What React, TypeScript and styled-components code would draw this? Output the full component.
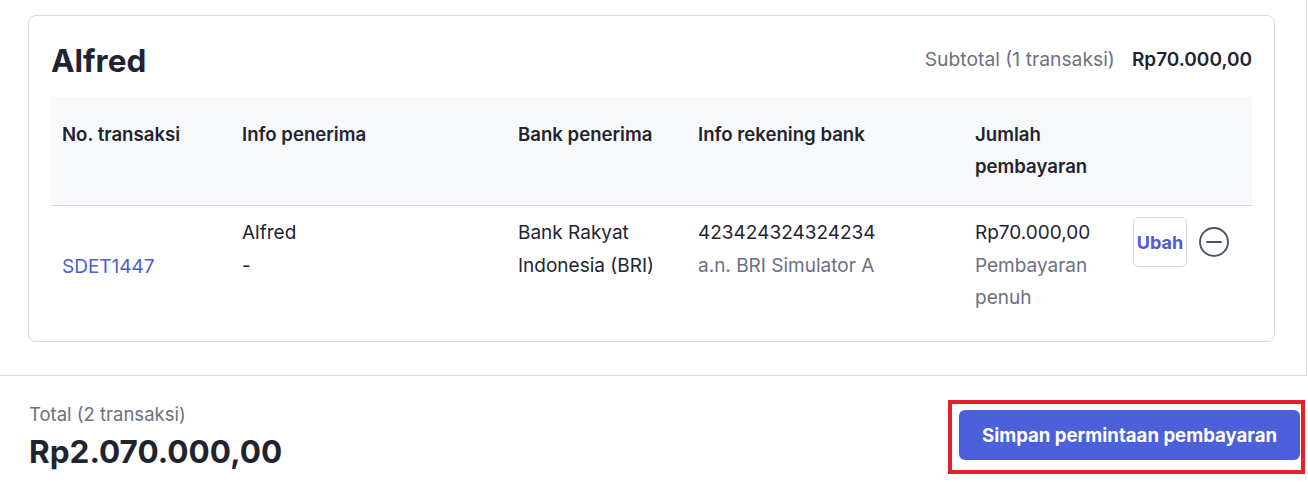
import styled, { createGlobalStyle } from 'styled-components';

const COLORS = {
  text: '#1f2430',
  muted: '#6b7280',
  border: '#d6d9df',
  headBg: '#f8f9fb',
  link: '#4f5bd5',
  primary: '#4c60dc',
  highlight: '#e3202b',
};

type Transaction = {
  id: string;
  recipient: string;
  recipientNote: string;
  bank: string[];
  account: string;
  accountName: string;
  amount: string;
  amountNote: string[];
};

const transactions: Transaction[] = [
  {
    id: 'SDET1447',
    recipient: 'Alfred',
    recipientNote: '-',
    bank: ['Bank Rakyat', 'Indonesia (BRI)'],
    account: '423424324324234',
    accountName: 'a.n. BRI Simulator A',
    amount: 'Rp70.000,00',
    amountNote: ['Pembayaran', 'penuh'],
  },
];

const GlobalStyle = createGlobalStyle`
  html, body {
    margin: 0;
    padding: 0;
    background: #ffffff;
  }

  body {
    font-family: Inter, "Noto Sans", "Liberation Sans", sans-serif;
    color: ${COLORS.text};
  }

  * {
    box-sizing: border-box;
  }
`;

export default function App() {
  return (
    <>
      <GlobalStyle />
      <Page>
        <Content>
          <Card>
            <CardHeader>
              <Title>Alfred</Title>
              <Subtotal>
                <SubtotalLabel>Subtotal (1 transaksi)</SubtotalLabel>
                <SubtotalValue>Rp70.000,00</SubtotalValue>
              </Subtotal>
            </CardHeader>
            <Table>
              <HeadCell>No. transaksi</HeadCell>
              <HeadCell>Info penerima</HeadCell>
              <HeadCell>Bank penerima</HeadCell>
              <HeadCell>Info rekening bank</HeadCell>
              <HeadCell>
                Jumlah
                <br />
                pembayaran
              </HeadCell>
              <HeadCell />
              {transactions.map((t) => (
                <Row key={t.id}>
                  <Cell $middle>
                    <TxLink href="#">{t.id}</TxLink>
                  </Cell>
                  <Cell>
                    <div>{t.recipient}</div>
                    <div>{t.recipientNote}</div>
                  </Cell>
                  <Cell>
                    {t.bank.map((line) => (
                      <div key={line}>{line}</div>
                    ))}
                  </Cell>
                  <Cell>
                    <div>{t.account}</div>
                    <Muted>{t.accountName}</Muted>
                  </Cell>
                  <Cell>
                    <div>{t.amount}</div>
                    {t.amountNote.map((line) => (
                      <Muted key={line}>{line}</Muted>
                    ))}
                  </Cell>
                  <ActionCell>
                    <EditButton>Ubah</EditButton>
                    <RemoveButton aria-label="Hapus">
                      <svg width="32" height="32" viewBox="0 0 32 32" fill="none">
                        <circle cx="16" cy="16" r="14" stroke="currentColor" strokeWidth="1.9" />
                        <path d="M9 16h14" stroke="currentColor" strokeWidth="1.9" strokeLinecap="round" />
                      </svg>
                    </RemoveButton>
                  </ActionCell>
                </Row>
              ))}
            </Table>
          </Card>
        </Content>
        <Footer>
          <Total>
            <TotalLabel>Total (2 transaksi)</TotalLabel>
            <TotalValue>Rp2.070.000,00</TotalValue>
          </Total>
          <Highlight>
            <PrimaryButton>Simpan permintaan pembayaran</PrimaryButton>
          </Highlight>
        </Footer>
      </Page>
    </>
  );
}

const Page = styled.div`
  width: 1307px;
  display: flex;
  flex-direction: column;
`;

const Content = styled.div`
  padding: 15px 31px 33px 28px;
  border-right: 1px solid #e4e6ea;
`;

const Card = styled.section`
  border: 1px solid ${COLORS.border};
  border-radius: 8px;
  padding: 24px 22px 0 22px;
  height: 327px;
`;

const CardHeader = styled.div`
  display: flex;
  justify-content: space-between;
  align-items: center;
  height: 42px;
  margin-bottom: 15px;
`;

const Title = styled.h2`
  margin: 0;
  font-size: 31.5px;
  font-weight: 700;
  line-height: 40px;
`;

const Subtotal = styled.div`
  display: flex;
  align-items: center;
  gap: 17px;
  font-size: 19px;
  margin-top: -4px;
`;

const SubtotalLabel = styled.span`
  color: ${COLORS.muted};
  font-size: 19.3px;
`;

const SubtotalValue = styled.span`
  font-weight: 600;
`;

const Table = styled.div`
  display: grid;
  grid-template-columns: 180px 276px 180px 277px 158px 1fr;
  font-size: 19px;
  line-height: 32.5px;
`;

const HeadCell = styled.div`
  background: ${COLORS.headBg};
  padding: 21px 11px 23px;
  font-size: 18.6px;
  line-height: 32px;
  font-weight: 600;
  border-bottom: 1px solid ${COLORS.border};
`;

const Row = styled.div`
  display: contents;
`;

const Cell = styled.div<{ $middle?: boolean }>`
  padding: 11px 11px 0;
  display: flex;
  flex-direction: column;
  justify-content: ${(p) => (p.$middle ? 'center' : 'flex-start')};
`;

const Muted = styled.div`
  color: ${COLORS.muted};
`;

const TxLink = styled.a`
  color: ${COLORS.link};
  text-decoration: none;
  margin-top: 2px;
`;

const ActionCell = styled.div`
  padding: 11px 11px 0;
  display: flex;
  align-items: flex-start;
  gap: 11px;
`;

const EditButton = styled.button`
  width: 54px;
  height: 50px;
  padding: 0;
  background: #ffffff;
  border: 1px solid ${COLORS.border};
  border-radius: 6px;
  font-family: inherit;
  font-size: 18px;
  font-weight: 700;
  color: ${COLORS.link};
`;

const RemoveButton = styled.button`
  width: 32px;
  height: 50px;
  padding: 0;
  border: none;
  background: none;
  color: #4b5563;
  display: flex;
  align-items: center;
  justify-content: center;
`;

const Footer = styled.footer`
  border-top: 1px solid ${COLORS.border};
  display: flex;
  justify-content: space-between;
  align-items: flex-start;
  padding: 24px 2px 0 29px;
  height: 107px;
`;

const Total = styled.div`
  display: flex;
  flex-direction: column;
`;

const TotalLabel = styled.span`
  font-size: 18.5px;
  line-height: 28px;
  color: ${COLORS.muted};
`;

const TotalValue = styled.span`
  font-size: 31.5px;
  font-weight: 700;
  line-height: 40px;
  margin-top: 4px;
`;

const Highlight = styled.div`
  border: 4px solid ${COLORS.highlight};
  padding: 6px 1px 10px 7px;
`;

const PrimaryButton = styled.button`
  width: 341px;
  height: 50px;
  border: none;
  border-radius: 6px;
  background: ${COLORS.primary};
  color: #ffffff;
  font-family: inherit;
  font-size: 18.6px;
  font-weight: 700;
`;
